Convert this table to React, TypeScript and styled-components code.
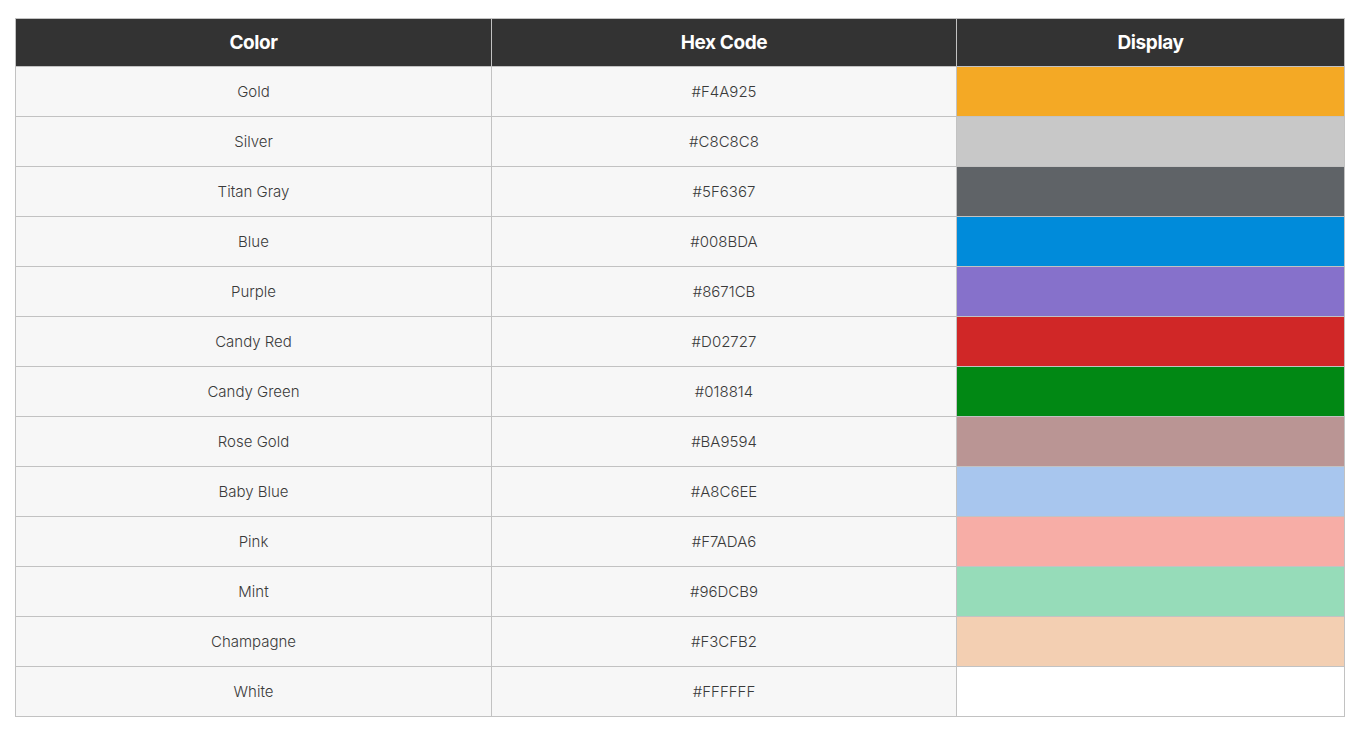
import React from "react";
import styled, { createGlobalStyle } from "styled-components";

const Global = createGlobalStyle`
  html, body { margin: 0; padding: 0; background: #ffffff; }
  body { font-family: Inter, "Noto Sans", Arial, sans-serif; }
`;

const Page = styled.div`
  padding: 18px 0 0 15px;
`;

const Table = styled.table`
  border-collapse: collapse;
  width: 1326px;
  table-layout: fixed;
  border: 1px solid #c2c2c2;
`;

const HeadCell = styled.th<{ $w: number }>`
  width: ${(p) => p.$w}px;
  height: 47px;
  padding: 0;
  background: #333333;
  color: #ffffff;
  font-family: Inter, Arial, sans-serif;
  font-weight: 700;
  font-size: 19px;
  letter-spacing: -0.4px;
  text-align: center;
  border: 1px solid #c2c2c2;
`;

const Cell = styled.td`
  height: 49px;
  padding: 0;
  background: #f7f7f7;
  color: #3a3a3a;
  font-size: 15px;
  font-weight: 300;
  text-align: center;
  border: 1px solid #c2c2c2;
`;

const Swatch = styled.td<{ $c: string }>`
  height: 49px;
  padding: 0;
  background: ${(p) => p.$c};
  border: 1px solid #c2c2c2;
`;

const rows: [string, string][] = [
  ["Gold", "#F4A925"],
  ["Silver", "#C8C8C8"],
  ["Titan Gray", "#5F6367"],
  ["Blue", "#008BDA"],
  ["Purple", "#8671CB"],
  ["Candy Red", "#D02727"],
  ["Candy Green", "#018814"],
  ["Rose Gold", "#BA9594"],
  ["Baby Blue", "#A8C6EE"],
  ["Pink", "#F7ADA6"],
  ["Mint", "#96DCB9"],
  ["Champagne", "#F3CFB2"],
  ["White", "#FFFFFF"],
];

export default function App() {
  return (
    <Page>
      <Global />
      <Table>
        <thead>
          <tr>
            <HeadCell $w={475}>Color</HeadCell>
            <HeadCell $w={464}>Hex Code</HeadCell>
            <HeadCell $w={387}>Display</HeadCell>
          </tr>
        </thead>
        <tbody>
          {rows.map(([name, hex]) => (
            <tr key={name}>
              <Cell>{name}</Cell>
              <Cell>{hex}</Cell>
              <Swatch $c={hex} />
            </tr>
          ))}
        </tbody>
      </Table>
    </Page>
  );
}
